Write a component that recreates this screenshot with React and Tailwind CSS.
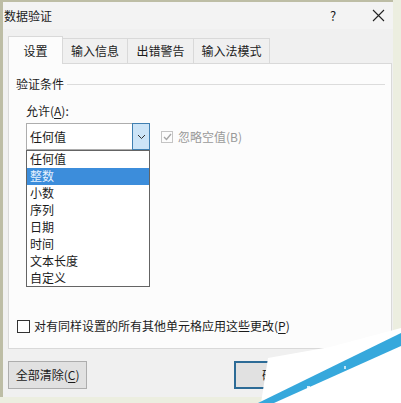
import React from "react";

const tabs = ["设置", "输入信息", "出错警告", "输入法模式"];
const tabWidths = ["w-[55px]", "w-[65px]", "w-[66px]", "w-[76px]"];
const options = ["任何值", "整数", "小数", "序列", "日期", "时间", "文本长度", "自定义"];

function Key({ children }) {
  return <span className="underline underline-offset-2">{children}</span>;
}

export default function App() {
  return (
    <div className="relative w-[401px] h-[403px] overflow-hidden bg-[#eceee0] font-['Noto_Sans_CJK_SC','Noto_Sans',sans-serif] text-[12px] leading-[16px] text-[#1b1b1b]">
      <div className="w-[393px] h-[397px] bg-[#f0f0f0] border-l-[3px] border-t-[2px] border-[#bdbda5] flex flex-col">
        {/* title bar */}
        <div className="h-[27px] flex items-center pl-[1px] bg-[#f3f3f3]">
          <span>数据验证</span>
          <span className="ml-auto w-[12px] text-[13px]">?</span>
          <svg className="ml-[30px] mr-[8px]" width="13" height="13" viewBox="0 0 13 13">
            <path d="M1 1 L12 12 M12 1 L1 12" stroke="#222" strokeWidth="1.1" />
          </svg>
        </div>

        {/* tabs */}
        <div className="relative z-10 flex items-end ml-[5px] mt-[7px] h-[28px] -mb-px">
          {tabs.map((t, i) =>
            i === 0 ? (
              <div
                key={t}
                className={`${tabWidths[i]} h-[28px] bg-[#fcfcfc] border border-b-0 border-[#d9d9d9] flex items-center justify-center`}
              >
                {t}
              </div>
            ) : (
              <div
                key={t}
                className={`${tabWidths[i]} h-[25px] bg-[#f0f0f0] border border-l-0 border-b-0 border-[#d9d9d9] flex items-center justify-center mb-px`}
              >
                {t}
              </div>
            )
          )}
        </div>

        {/* panel */}
        <div className="relative ml-[5px] w-[384px] h-[286px] bg-[#fcfcfc] border border-[#d9d9d9] flex flex-col">
          <div className="flex items-center pt-[12px] pl-[7px]">
            <span>验证条件</span>
            <div className="flex-1 h-px bg-[#dcdcdc] ml-[3px] mr-[6px]" />
          </div>

          <div className="pl-[17px] mt-[11px]">
            允许(<Key>A</Key>):
          </div>

          <div className="flex items-center pl-[17px] mt-[4px]">
            <div className="w-[124px] h-[27px] bg-white border border-[#adadad] flex items-stretch">
              <div className="flex-1 flex items-center pl-[3px]">任何值</div>
              <div className="w-[18px] -my-px -mr-px bg-[#cce4f7] border border-[#3f7fb1] flex items-center justify-center">
                <svg width="9" height="6" viewBox="0 0 9 6">
                  <path d="M1 1 L4.5 4.5 L8 1" stroke="#333" strokeWidth="1" fill="none" />
                </svg>
              </div>
            </div>
            <div className="ml-[11px] w-[12px] h-[12px] border border-[#c4c4c4] bg-[#fcfcfc] flex items-center justify-center">
              <svg width="9" height="8" viewBox="0 0 9 8">
                <path d="M1 4 L3.5 6.5 L8 1" stroke="#a6a6a6" strokeWidth="1.4" fill="none" />
              </svg>
            </div>
            <span className="ml-[5px] text-[#9a9a9a]">忽略空值(B)</span>
          </div>

          {/* dropdown list */}
          <div className="absolute left-[17px] top-[86px] w-[124px] h-[137px] bg-white border border-[#646464] z-20">
            {options.map((o, i) => (
              <div
                key={o}
                className={`h-[16.9px] flex items-center pl-[3px] ${i === 1 ? "bg-[#3c8ddb] text-[#e6f2ff]" : ""}`}
              >
                {o}
              </div>
            ))}
          </div>

          <div className="mt-auto pb-[14px] pl-[8px] flex items-center">
            <div className="w-[13px] h-[13px] border border-[#333] bg-white" />
            <span className="ml-[4px]">
              对有同样设置的所有其他单元格应用这些更改(<Key>P</Key>)
            </span>
          </div>
        </div>

        {/* buttons */}
        <div className="flex ml-[5px] mt-[12px]">
          <div className="w-[80px] h-[28px] bg-[#e1e1e1] border border-[#adadad] flex items-center justify-center">
            全部清除(<Key>C</Key>)
          </div>
          <div className="ml-[147px] w-[80px] h-[28px] bg-[#e1e1e1] border-2 border-[#2c6b96] flex items-center justify-center">
            确定
          </div>
          <div className="ml-[10px] w-[70px] h-[28px] bg-[#e1e1e1] border border-[#adadad] flex items-center justify-center">
            取消
          </div>
        </div>
      </div>

      {/* watermark overlay */}
      <svg className="absolute inset-0 pointer-events-none" width="401" height="403" viewBox="0 0 401 403">
        <polygon points="268,358 330,347 401,328 401,403 261,403" fill="#ffffff" />
        <polygon points="258,403 274,403 401,346 401,333" fill="#36a8dc" />
        <rect x="307" y="386" width="3" height="4" fill="#ffffff" opacity="0.8" />
        <rect x="311" y="387" width="2" height="3" fill="#ffffff" opacity="0.8" />
        <rect x="344" y="366" width="2" height="3" fill="#ffffff" opacity="0.7" />
      </svg>
    </div>
  );
}
